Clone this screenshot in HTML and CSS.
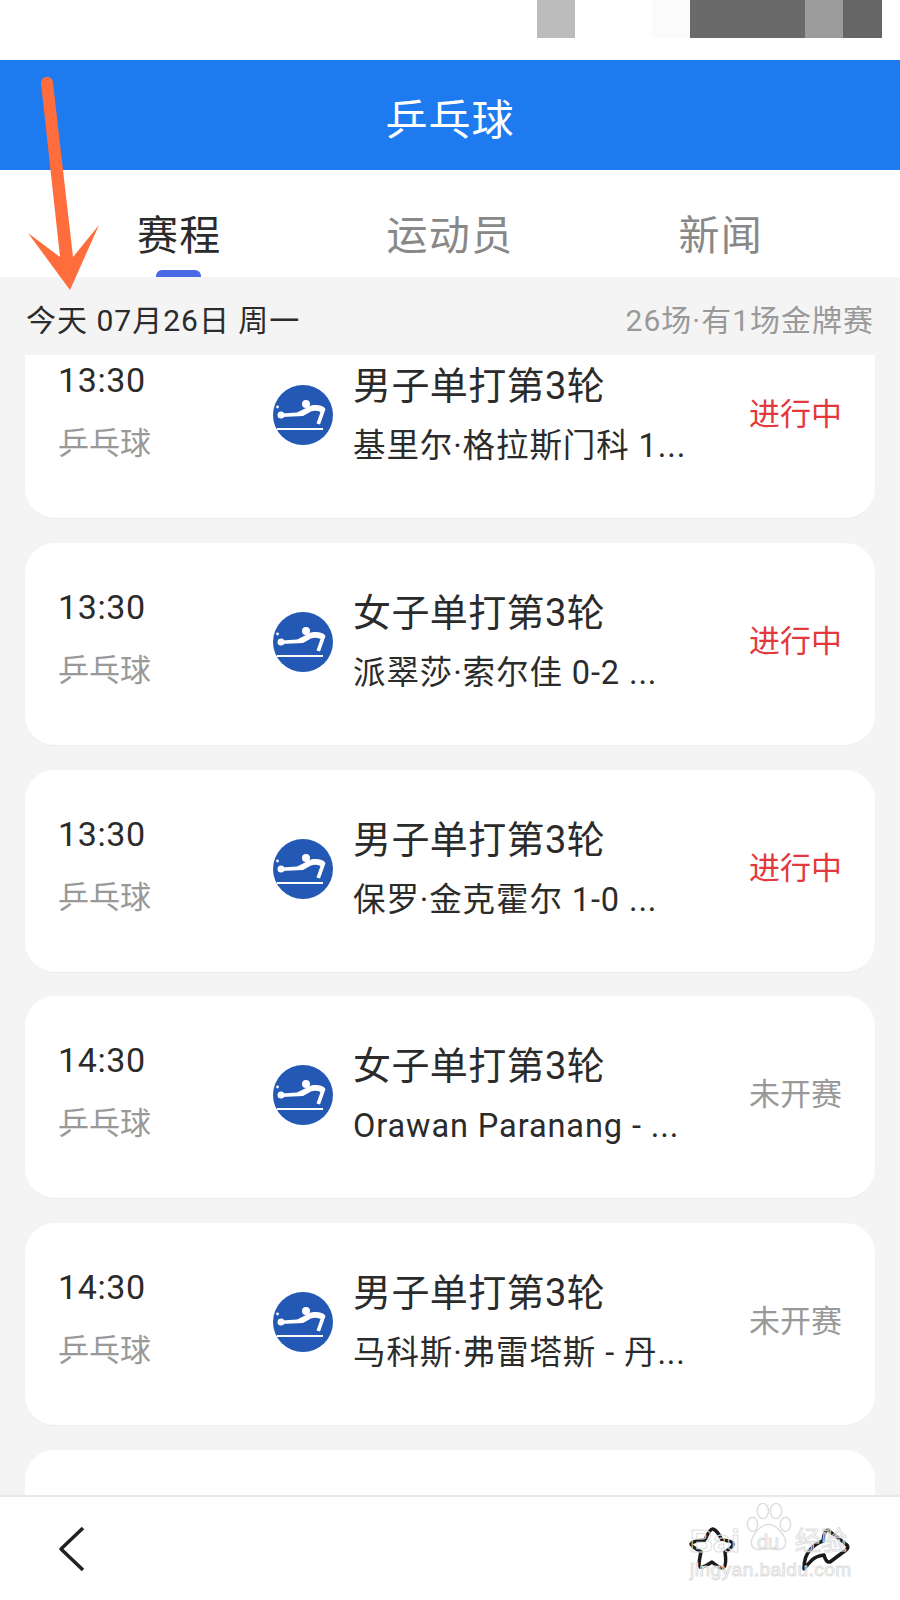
FILE: index.html
```html
<!DOCTYPE html>
<html lang="zh-CN">
<head>
    <meta charset="UTF-8">
    <meta name="viewport" content="width=device-width, initial-scale=1.0">
    <title>乒乓球</title>
    <link rel="stylesheet" href="styles.css">
</head>
<body>
    <svg width="0" height="0" class="defs">
        <symbol id="pingpong" viewBox="0 0 60 60">
            <circle cx="30" cy="30" r="30" fill="#2358b4"/>
            <circle cx="4.500" cy="22" r="1.400" fill="#fff"/>
            <circle cx="8" cy="30" r="3.500" fill="#fff"/>
            <circle cx="33" cy="19" r="4" fill="#fff"/>
            <path d="M24 27.500 L38 20.500 C44 19.500 50 20 52.500 24 L47 39.500 L43.500 38.500 L47.500 27 C44 25.500 41 25.500 38 26.500 L30 31 L9 32 L9 28.500 Z" fill="#fff"/>
            <path d="M4 44 H50" stroke="#fff" stroke-width="1.800"/>
        </symbol>
    </svg>

    <div class="app">
        <div class="status-bar">
            <span class="block block-light"></span>
            <span class="block-gap"></span>
            <span class="block block-faint"></span>
            <span class="block block-wide"></span>
            <span class="block block-mid"></span>
            <span class="block block-dark"></span>
        </div>

        <header class="title-bar">乒乓球</header>

        <nav class="tabs">
            <div class="tab active">赛程</div>
            <div class="tab">运动员</div>
            <div class="tab">新闻</div>
        </nav>

        <div class="date-bar">
            <span class="date">今天 07月26日 周一</span>
            <span class="count">26场·有1场金牌赛</span>
        </div>

        <main class="list">
            <div class="list-inner">
                <div class="card">
                    <div class="when"><div class="time">13:30</div><div class="sport">乒乓球</div></div>
                    <svg class="sport-icon"><use href="#pingpong"/></svg>
                    <div class="info"><div class="event">男子单打第3轮</div><div class="players">基里尔·格拉斯门科 1...</div></div>
                    <div class="state live">进行中</div>
                </div>
                <div class="card">
                    <div class="when"><div class="time">13:30</div><div class="sport">乒乓球</div></div>
                    <svg class="sport-icon"><use href="#pingpong"/></svg>
                    <div class="info"><div class="event">女子单打第3轮</div><div class="players">派翠莎·索尔佳 0-2 ...</div></div>
                    <div class="state live">进行中</div>
                </div>
                <div class="card">
                    <div class="when"><div class="time">13:30</div><div class="sport">乒乓球</div></div>
                    <svg class="sport-icon"><use href="#pingpong"/></svg>
                    <div class="info"><div class="event">男子单打第3轮</div><div class="players">保罗·金克霍尔 1-0 ...</div></div>
                    <div class="state live">进行中</div>
                </div>
                <div class="card">
                    <div class="when"><div class="time">14:30</div><div class="sport">乒乓球</div></div>
                    <svg class="sport-icon"><use href="#pingpong"/></svg>
                    <div class="info"><div class="event">女子单打第3轮</div><div class="players">Orawan Paranang - ...</div></div>
                    <div class="state">未开赛</div>
                </div>
                <div class="card">
                    <div class="when"><div class="time">14:30</div><div class="sport">乒乓球</div></div>
                    <svg class="sport-icon"><use href="#pingpong"/></svg>
                    <div class="info"><div class="event">男子单打第3轮</div><div class="players">马科斯·弗雷塔斯 - 丹...</div></div>
                    <div class="state">未开赛</div>
                </div>
                <div class="card"></div>
            </div>
        </main>

        <footer class="bottom-bar">
            <svg class="back" width="30" height="50" viewBox="0 0 30 50">
                <path d="M26 4 L4 25 L26 46" fill="none" stroke="#222" stroke-width="3.500" stroke-linejoin="round"/>
            </svg>
            <div class="actions">
                <svg width="46" height="46" viewBox="0 0 46 46">
                    <path d="M16 14 Q21 2 24 3 Q28 4 33 14 Q44 15 44 18 Q44 21 36 26 Q38 40 34 42 Q30 42 23 36 Q14 42 11 41 Q9 39 12 26 Q2 20 2 18 Q3 15 16 14 Z" fill="none" stroke="#1a1a1a" stroke-width="3.500" stroke-linejoin="round"/>
                </svg>
                <svg width="50" height="46" viewBox="0 0 50 46">
                    <path d="M2 43 Q2 30 8 24 Q14 17 21 15 Q22 4 26 4 L45 19 Q47 22 44 24 L28 36 Q24 37 22 29 Q14 30 10 34 Q6 38 2 43 Z" fill="none" stroke="#1a1a1a" stroke-width="3.500" stroke-linejoin="round"/>
                </svg>
            </div>
        </footer>

        <!-- annotation arrow drawn on top of the screenshot -->
        <svg class="arrow" width="110" height="240" viewBox="0 0 110 240">
            <path d="M36 18 C36 10 48 10 48 18 L68 192 L94 160 L65 225 L23 168 L55 192 Z" fill="#ff6d3c"/>
        </svg>

        <div class="watermark">
            <svg class="paw" width="47" height="50" viewBox="0 0 50 56" preserveAspectRatio="none">
                <g fill="none" stroke="#dcdcdc" stroke-width="1.500">
                    <ellipse cx="8" cy="24" rx="5.500" ry="8"/>
                    <ellipse cx="19" cy="9" rx="6" ry="8.500"/>
                    <ellipse cx="33" cy="9" rx="6" ry="8.500"/>
                    <ellipse cx="43" cy="24" rx="5.500" ry="8"/>
                    <path d="M25 24 C34 24 47 40 42 49 C37 55 30 51 25 51 C20 51 13 55 8 49 C3 40 16 24 25 24 Z"/>
                </g>
            </svg>
            <span class="wm-bai">Bai</span>
            <span class="wm-du">du</span>
            <span class="wm-jy">经验</span>
            <span class="wm-url">jingyan.baidu.com</span>
        </div>
    </div>
</body>
</html>
```

FILE: styles.css
```css
* {
    box-sizing: border-box;
}

body {
    font-family: Roboto, "Noto Sans CJK SC", sans-serif;
    margin: 0;
    background-color: #fff;
}

.defs {
    position: absolute;
}

.app {
    position: relative;
    display: flex;
    flex-direction: column;
    height: 1600px;
    overflow: hidden;
    background-color: #f4f4f4;
}

.status-bar {
    display: flex;
    height: 60px;
    padding-left: 537px;
    background-color: #fff;
}

.block {
    display: block;
    height: 38px;
}

.block-light {
    width: 38px;
    background-color: #bcbcbc;
}

.block-gap {
    width: 77px;
}

.block-faint {
    width: 38px;
    background-color: #fbfbfb;
}

.block-wide {
    width: 115px;
    background-color: #6a6a6a;
}

.block-mid {
    width: 38px;
    background-color: #9c9c9c;
}

.block-dark {
    width: 39px;
    background-color: #666;
}

.title-bar {
    height: 110px;
    line-height: 122px;
    text-align: center;
    font-size: 42px;
    letter-spacing: 1px;
    color: #fff;
    background-color: #1e7bef;
}

.tabs {
    display: flex;
    height: 107px;
    padding: 0 44px;
    background-color: #fff;
}

.tab {
    position: relative;
    flex: 1;
    padding-top: 35px;
    line-height: 62px;
    text-align: center;
    font-size: 41px;
    letter-spacing: 1.300px;
    color: #888;
}

.tab.active {
    color: #2b2b2b;
}

.tab.active::after {
    content: "";
    position: absolute;
    left: 112px;
    bottom: 0;
    width: 45px;
    height: 7px;
    border-radius: 6px 6px 0 0;
    background-color: #4a69e2;
}

.date-bar {
    display: flex;
    justify-content: space-between;
    align-items: center;
    height: 78px;
    padding: 14px 26px 10px;
    font-size: 30px;
    letter-spacing: 1px;
}

.date {
    color: #2b2b2b;
}

.count {
    color: #999;
}

.list {
    flex: 1;
    min-height: 0;
    overflow: hidden;
}

.list-inner {
    display: flex;
    flex-direction: column;
    gap: 23.800px;
    margin-top: -39px;
    padding: 0 25px;
}

.card {
    display: flex;
    flex-shrink: 0;
    height: 203px;
    padding: 0 33px 0 33px;
    border-bottom: 1px solid #ececec;
    border-radius: 30px;
    background-color: #fff;
}

.when {
    width: 215px;
    padding-top: 40px;
}

.time {
    height: 48px;
    line-height: 48px;
    font-size: 34px;
    letter-spacing: 0.600px;
    color: #2b2b2b;
}

.sport {
    margin-top: 16px;
    line-height: 48px;
    font-size: 31px;
    color: #999;
}

.sport-icon {
    flex-shrink: 0;
    width: 60px;
    height: 60px;
    margin-top: 69px;
}

.info {
    flex: 1;
    min-width: 0;
    padding: 44px 0 0 20px;
}

.event {
    line-height: 52px;
    font-size: 38px;
    letter-spacing: 0.400px;
    color: #2b2b2b;
}

.players {
    margin-top: 8px;
    line-height: 52px;
    font-size: 32.500px;
    letter-spacing: 0.900px;
    color: #2b2b2b;
    white-space: nowrap;
}

.state {
    padding-top: 75px;
    line-height: 48px;
    font-size: 31px;
    color: #999;
}

.state.live {
    color: #e4393c;
}

.bottom-bar {
    display: flex;
    justify-content: space-between;
    align-items: center;
    height: 105px;
    padding: 0 48px 0 57px;
    border-top: 2px solid #e8e8e8;
    background-color: #fff;
}

.actions {
    display: flex;
    align-items: center;
    gap: 67px;
}

.arrow {
    position: absolute;
    left: 5px;
    top: 65px;
}

.watermark {
    position: absolute;
    left: 680px;
    top: 1500px;
    width: 190px;
    height: 90px;
    line-height: 1;
    color: transparent;
    -webkit-text-stroke: 1px #dedede;
    font-family: "Liberation Sans", sans-serif;
}

.paw {
    position: absolute;
    left: 65px;
    top: 3px;
}

.wm-bai {
    position: absolute;
    left: 10px;
    top: 25px;
    font-size: 32px;
    font-weight: 700;
}

.wm-du {
    position: absolute;
    left: 77px;
    top: 32px;
    font-size: 20px;
}

.wm-jy {
    position: absolute;
    left: 115px;
    top: 26px;
    font-family: "Noto Sans CJK SC", sans-serif;
    font-size: 26px;
}

.wm-url {
    position: absolute;
    left: 10px;
    top: 60px;
    font-size: 19px;
    letter-spacing: 0.500px;
}
```
